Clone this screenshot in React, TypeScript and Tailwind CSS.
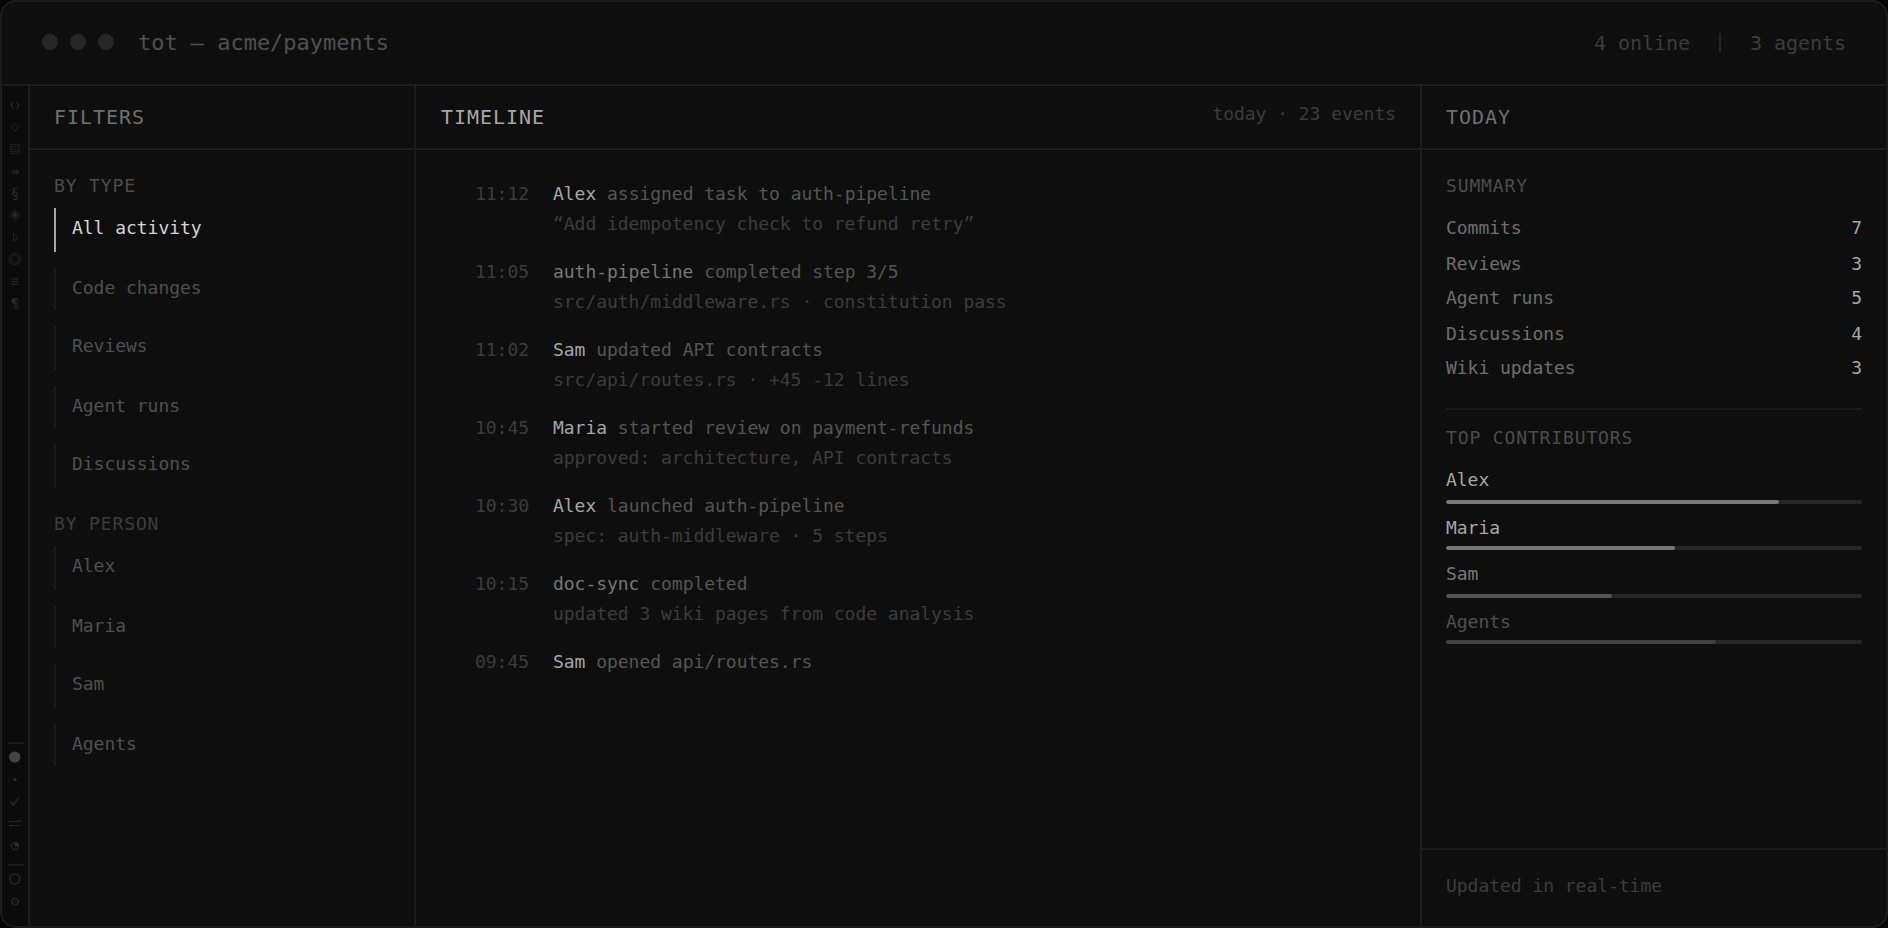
import type { ReactNode } from "react";

type FilterGroup = { title: string; titleClass: string; items: string[]; active?: string };

const filterGroups: FilterGroup[] = [
  {
    title: "BY TYPE",
    titleClass: "mt-[25px] text-[#4c4c4c]",
    items: ["All activity", "Code changes", "Reviews", "Agent runs", "Discussions"],
    active: "All activity",
  },
  {
    title: "BY PERSON",
    titleClass: "mt-[25px] text-[#3c3c3c]",
    items: ["Alex", "Maria", "Sam", "Agents"],
  },
];

type Event = { time: string; who: string; agent?: boolean; what: string; detail?: string };

const events: Event[] = [
  { time: "11:12", who: "Alex", what: "assigned task to auth-pipeline", detail: "“Add idempotency check to refund retry”" },
  { time: "11:05", who: "auth-pipeline", agent: true, what: "completed step 3/5", detail: "src/auth/middleware.rs · constitution pass" },
  { time: "11:02", who: "Sam", what: "updated API contracts", detail: "src/api/routes.rs · +45 -12 lines" },
  { time: "10:45", who: "Maria", what: "started review on payment-refunds", detail: "approved: architecture, API contracts" },
  { time: "10:30", who: "Alex", what: "launched auth-pipeline", detail: "spec: auth-middleware · 5 steps" },
  { time: "10:15", who: "doc-sync", agent: true, what: "completed", detail: "updated 3 wiki pages from code analysis" },
  { time: "09:45", who: "Sam", what: "opened api/routes.rs" },
];

const summary = [
  { label: "Commits", value: 7 },
  { label: "Reviews", value: 3 },
  { label: "Agent runs", value: 5 },
  { label: "Discussions", value: 4 },
  { label: "Wiki updates", value: 3 },
];

const contributors = [
  { name: "Alex", share: 80, text: "text-[#a6a6a6]", bar: "bg-[#777777]" },
  { name: "Maria", share: 55, text: "text-[#a6a6a6]", bar: "bg-[#777777]" },
  { name: "Sam", share: 40, text: "text-[#777777]", bar: "bg-[#555555]" },
  { name: "Agents", share: 65, text: "text-[#505050]", bar: "bg-[#404040]" },
];

function Glyph({ children, className = "text-[#252525]" }: { children: ReactNode; className?: string }) {
  return (
    <div className={`flex h-[22px] w-[26px] items-center justify-center ${className}`}>
      <svg width="22" height="22" viewBox="0 0 22 22" fill="none" stroke="currentColor" strokeWidth="1">
        {children}
      </svg>
    </div>
  );
}

function Rail() {
  return (
    <nav className="flex w-[28px] shrink-0 flex-col border-r-2 border-[#1c1c1c] bg-[#0b0b0b] pt-[8px]">
      <Glyph className="text-[#2a2a2a]">
        <path d="M9.3 8 7 11.3l2.3 3.4M12.7 8 15 11.3l-2.3 3.4" strokeWidth="1.2" />
      </Glyph>
      <Glyph>
        <path d="M11 7.6 14.8 11.4 11 15.2 7.2 11.4Z" />
      </Glyph>
      <Glyph className="text-[#1e1e1e]">
        <path d="M6.5 6.5h9v9h-9zM6.5 8.7h9M6.5 11h9M6.5 13.3h9" />
      </Glyph>
      <Glyph>
        <path d="M7 12h8M9.3 9.8l2.4 2.2-2.4 2.2M12 9.8l2.6 2.2-2.6 2.2" strokeWidth="1.2" />
      </Glyph>
      <div className="flex h-[22px] items-center justify-center text-[14px] leading-[22px] text-[#2a2a2a]">§</div>
      <Glyph>
        <path d="M11 5.5 16.5 11 11 16.5 5.5 11Z" />
        <path d="M11 8 14 11 11 14 8 11Z" fill="currentColor" />
      </Glyph>
      <Glyph className="text-[#222222]">
        <path d="M9.5 7.4v8L14.2 11.4Z" />
      </Glyph>
      <Glyph className="text-[#222222]">
        <circle cx="11" cy="10.8" r="5.9" />
        <circle cx="11" cy="10.8" r="4" />
      </Glyph>
      <Glyph>
        <path d="M7.2 8.8h7.2M7.2 11.5h7.2M7.2 14.2h7.2" strokeWidth="1.2" />
      </Glyph>
      <div className="flex h-[22px] items-center justify-center text-[14px] leading-[22px] text-[#2a2a2a]">¶</div>

      <div className="mt-auto mr-[4px] ml-[6px] h-[2px] bg-[#1e1e1e]" />
      <div className="mt-[2px] flex flex-col">
        <Glyph className="text-[#454545]">
          <circle cx="10.7" cy="11" r="5.6" fill="currentColor" stroke="none" />
        </Glyph>
        <Glyph className="text-[#2a2a2a]">
          <circle cx="10.8" cy="11.5" r="1.7" fill="currentColor" stroke="none" />
        </Glyph>
        <Glyph className="text-[#2a2a2a]">
          <path d="M6.3 11.2 9.3 15.2 15 6.8" strokeWidth="1.2" />
        </Glyph>
        <Glyph>
          <path d="M5 9.5h12l-2.5-1.6M17 13.5H5l2.5 1.6" />
        </Glyph>
        <Glyph className="text-[#2a2a2a]">
          <circle cx="11" cy="12" r="3.7" />
          <path d="M11 12V8.3A3.7 3.7 0 0 1 14.7 12Z" fill="currentColor" />
        </Glyph>
      </div>
      <div className="mt-[8px] mr-[4px] ml-[6px] h-[2px] bg-[#1e1e1e]" />
      <div className="mt-[2px] mb-[14px] flex flex-col">
        <Glyph className="text-[#2c2c2c]">
          <circle cx="10.7" cy="11" r="5" strokeWidth="1.1" />
        </Glyph>
        <Glyph className="text-[#2a2a2a]">
          <circle cx="11" cy="11.5" r="3.5" strokeDasharray="1.5 1.25" strokeWidth="1.4" />
          <circle cx="11" cy="11.5" r="2.8" strokeWidth="0.9" />
          <circle cx="11" cy="11.5" r="0.8" fill="currentColor" stroke="none" />
        </Glyph>
      </div>
    </nav>
  );
}

function PanelHeader({
  title,
  titleClass,
  padding = "px-6",
  children,
}: {
  title: string;
  titleClass: string;
  padding?: string;
  children?: ReactNode;
}) {
  return (
    <div className={`flex h-[64px] shrink-0 items-start justify-between border-b-2 border-[#1c1c1c] ${padding}`}>
      <h2 className={`mt-[19px] text-[20px] leading-[24px] tracking-[0.048em] ${titleClass}`}>{title}</h2>
      {children}
    </div>
  );
}

function Filters() {
  return (
    <aside className="flex w-[386px] shrink-0 flex-col border-r-2 border-[#1c1c1c]">
      <PanelHeader title="FILTERS" titleClass="text-[#707070]" />
      <div className="flex flex-col px-6">
        {filterGroups.map((group) => (
          <section key={group.title}>
            <h3 className={`tracking-[0.048em] ${group.titleClass}`}>{group.title}</h3>
            <ul className="mt-3 flex flex-col gap-4">
              {group.items.map((item) => (
                <li
                  key={item}
                  className={`border-l-2 pt-[9px] pl-4 odd:h-[44px] even:h-[42px] ${
                    item === group.active ? "border-[#a6a6a6] text-[#d4d4d4]" : "border-[#181818] text-[#505050]"
                  }`}
                >
                  {item}
                </li>
              ))}
            </ul>
          </section>
        ))}
      </div>
    </aside>
  );
}

function Timeline() {
  return (
    <main className="flex min-w-0 flex-1 flex-col">
      <PanelHeader title="TIMELINE" titleClass="text-[#a6a6a6]" padding="pr-6 pl-[25px]">
        <span className="mt-[17px] text-[#3c3c3c]">today · 23 events</span>
      </PanelHeader>
      <ol className="flex flex-col gap-[27px] pt-[33px] pr-6 pl-[25px]">
        {events.map((e) => (
          <li key={e.time} className="flex gap-6">
            <time className="w-[88px] text-right text-[#3c3c3c]">{e.time}</time>
            <div className="flex flex-col gap-[9px]">
              <p className="text-[#555555]">
                <span className={e.agent ? "text-[#777777]" : "text-[#a6a6a6]"}>{e.who}</span> {e.what}
              </p>
              {e.detail && <p className="text-[#3c3c3c]">{e.detail}</p>}
            </div>
          </li>
        ))}
      </ol>
    </main>
  );
}

function Today() {
  return (
    <aside className="flex w-[466px] shrink-0 flex-col border-l-2 border-[#1c1c1c]">
      <PanelHeader title="TODAY" titleClass="text-[#707070]" />
      <div className="flex flex-1 flex-col px-6">
        <h3 className="mt-[25px] tracking-[0.048em] text-[#4c4c4c]">SUMMARY</h3>
        <dl className="mt-[21px] flex flex-col">
          {summary.map((row) => (
            <div key={row.label} className="flex justify-between odd:h-[36px] even:h-[34px]">
              <dt className="text-[#6e6e6e]">{row.label}</dt>
              <dd className="text-[#a6a6a6]">{row.value}</dd>
            </div>
          ))}
        </dl>
        <div className="mt-[15px] h-[2px] bg-[#181818]" />
        <h3 className="mt-[17px] tracking-[0.048em] text-[#4c4c4c]">TOP CONTRIBUTORS</h3>
        <ul className="mt-[21px] flex flex-col gap-[13px]">
          {contributors.map((c) => (
            <li key={c.name} className="flex flex-col justify-between odd:h-[35px] even:h-[33px]">
              <span className={c.text}>{c.name}</span>
              <div className="h-1 overflow-hidden rounded-full bg-[#262626]">
                <div className={`h-full rounded-full ${c.bar}`} style={{ width: `${c.share}%` }} />
              </div>
            </li>
          ))}
        </ul>
      </div>
      <footer className="h-[78px] border-t-2 border-[#1c1c1c] px-6 pt-[25px] text-[#3c3c3c]">
        Updated in real-time
      </footer>
    </aside>
  );
}

export default function App() {
  return (
    <div className="h-[928px] w-[1888px] bg-[#050505]">
      <div className="flex h-full w-full flex-col overflow-hidden rounded-[16px] border-2 border-[#1c1c1c] bg-[#0e0e0e] font-['DejaVu_Sans_Mono',monospace] text-[18px] leading-[21px] tracking-[-0.002em] whitespace-nowrap">
        <header className="flex h-[84px] shrink-0 items-start border-b-2 border-[#1c1c1c] px-10">
          <div className="mt-8 flex gap-3">
            <span className="size-4 rounded-full bg-[#262626]" />
            <span className="size-4 rounded-full bg-[#262626]" />
            <span className="size-4 rounded-full bg-[#262626]" />
          </div>
          <h1 className="mt-[28px] ml-6 text-[22px] leading-[25px] text-[#505050]">tot — acme/payments</h1>
          <div className="mt-[29px] ml-auto flex gap-6 text-[20px] leading-[24px] text-[#3c3c3c]">
            <span>4 online</span>
            <span className="flex w-3 justify-center pt-[2px]">
              <span className="h-[19px] w-[2px] bg-[#262626]" />
            </span>
            <span>3 agents</span>
          </div>
        </header>
        <div className="flex min-h-0 flex-1">
          <Rail />
          <Filters />
          <Timeline />
          <Today />
        </div>
      </div>
    </div>
  );
}
